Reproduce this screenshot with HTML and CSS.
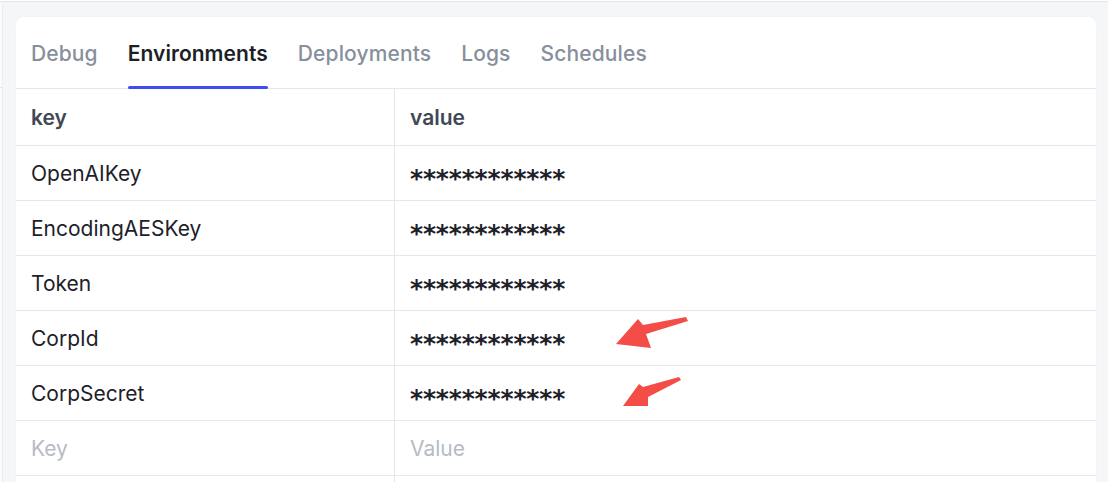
FILE: index.html
```html
<!DOCTYPE html>
<html>
<head>
<meta charset="utf-8">
<link rel="stylesheet" href="styles.css">
</head>
<body>
<div class="topline"></div>
<div class="layout">
  <div class="sidepanel"><div class="side-head"></div></div>
  <main class="main">
    <section class="card">
      <nav class="tabs">
        <div class="tab">Debug</div>
        <div class="tab active">Environments</div>
        <div class="tab">Deployments</div>
        <div class="tab">Logs</div>
        <div class="tab">Schedules</div>
      </nav>
      <div class="table">
        <div class="row head"><div class="cell">key</div><div class="cell val">value</div></div>
        <div class="row"><div class="cell">OpenAIKey</div><div class="cell val"><span class="mask">************</span></div></div>
        <div class="row"><div class="cell">EncodingAESKey</div><div class="cell val"><span class="mask">************</span></div></div>
        <div class="row"><div class="cell">Token</div><div class="cell val"><span class="mask">************</span></div></div>
        <div class="row"><div class="cell">CorpId</div><div class="cell val"><span class="mask">************</span></div></div>
        <div class="row"><div class="cell">CorpSecret</div><div class="cell val"><span class="mask">************</span></div></div>
        <div class="row placeholder"><div class="cell">Key</div><div class="cell val">Value</div></div>
        <div class="row"><div class="cell"></div><div class="cell val"></div></div>
      </div>
      <svg class="arrows" width="1108" height="482" viewBox="0 0 1108 482">
        <polygon fill="#f44c47" points="616,344 638,319 643,325 686,317 688,321 646,334 651,348"/>
        <polygon fill="#f44c47" points="623,406 639,384 643,387 679,377 681,380 648,397 648,406"/>
      </svg>
    </section>
  </main>
</div>
</body>
</html>
```

FILE: styles.css
```css
* { box-sizing: border-box; }
html, body { margin: 0; padding: 0; height: 100%; overflow: hidden; }
body {
  background: #f5f6f8;
  font-family: Inter, "Noto Sans", sans-serif;
  color: #1d2129;
}
.topline {
  height: 2px;
  background: #ffffff;
  border-bottom: 1px solid #e4e6ea;
}
.layout {
  display: flex;
  height: calc(100% - 2px);
}
.sidepanel {
  width: 3px;
  background: #fbfbfc;
  border-right: 1px solid #eceef1;
  flex: none;
}
.side-head {
  height: 86px;
  border-bottom: 1px solid #e4e6ea;
}
.main {
  flex: 1;
  padding: 15px 12px 0 13px;
}
.card {
  background: #ffffff;
  border-radius: 8px 8px 0 0;
  height: 100%;
  box-shadow: 0 0 2px rgba(0,0,0,0.03);
  position: relative;
  overflow: hidden;
}
.tabs {
  display: flex;
  gap: 30px;
  padding-left: 15px;
  height: 72px;
  border-bottom: 1px solid #e5e7eb;
}
.tab {
  position: relative;
  font-size: 21px;
  font-weight: 500;
  letter-spacing: 0.12px;
  color: #878f9c;
  display: flex;
  align-items: center;
  padding-top: 2px;
}
.tab.active {
  color: #1c1f26;
  font-weight: 600;
  letter-spacing: 0.05px;
}
.tab.active::after {
  content: "";
  position: absolute;
  left: 0;
  right: 0;
  bottom: -1px;
  height: 3px;
  border-radius: 2px;
  background: #3d4cf6;
}
.table { display: flex; flex-direction: column; }
.row {
  display: grid;
  grid-template-columns: 378px 1fr;
  height: 55px;
  flex: none;
  border-bottom: 1px solid #e5e7eb;
}
.row.head { height: 57px; }
.cell {
  display: flex;
  align-items: center;
  padding-left: 15px;
  font-size: 21px;
  padding-top: 1px;
}
.cell.val {
  border-left: 1px solid #e5e7eb;
  padding-left: 15px;
}
.head .cell { font-weight: 600; color: #414854; }
.placeholder .cell { color: #b6bbc4; }
.mask {
  font-family: "DejaVu Sans", sans-serif;
  font-size: 25px;
  font-weight: 600;
  line-height: 1;
  letter-spacing: -0.15px;
  display: inline-block;
  transform: translateY(5px);
  color: #1d2129;
}
.arrows {
  position: absolute;
  left: -16px;
  top: -17px;
  pointer-events: none;
}
```
